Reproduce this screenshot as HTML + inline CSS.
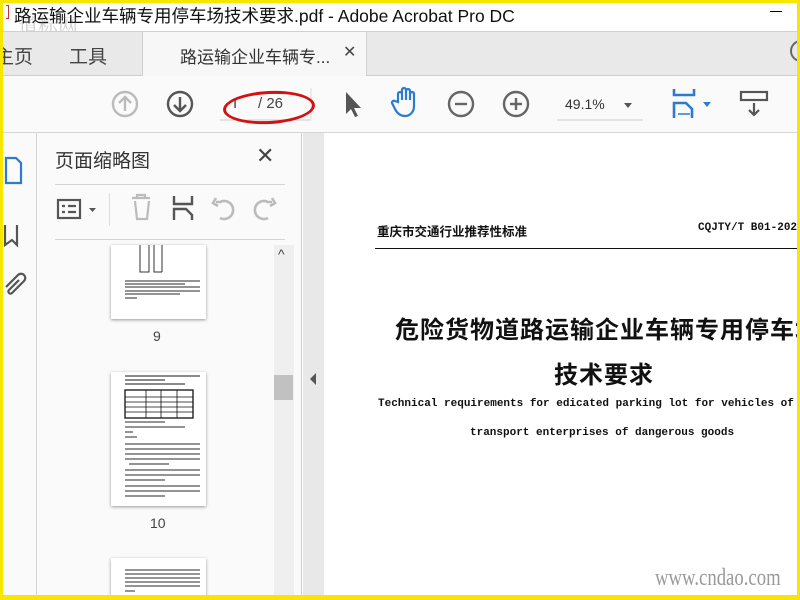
<!DOCTYPE html>
<html><head><meta charset="utf-8"><style>
*{margin:0;padding:0;box-sizing:border-box}
body{width:800px;height:600px;overflow:hidden;position:relative;background:#fff;font-family:"Liberation Sans","Noto Sans CJK SC",sans-serif}
.a{position:absolute}
</style></head><body>
<!-- title bar -->
<div class="a" style="left:0;top:0;width:800px;height:31px;background:#fff"></div>
<div class="a" style="left:14px;top:3px;font-size:17.5px;color:#111;white-space:nowrap">路运输企业车辆专用停车场技术要求.pdf - Adobe Acrobat Pro DC</div>
<div class="a" style="left:6px;top:5px;width:3px;height:14px;border:1px solid #c33;border-left:none"></div>
<div class="a" style="left:18px;top:10px;font-size:20px;color:rgba(120,120,120,.35);font-family:'Noto Serif CJK SC',serif">道标网</div>
<div class="a" style="left:770px;top:11px;width:12px;height:1px;background:#000"></div>
<!-- tab bar -->
<div class="a" style="left:0;top:31px;width:800px;height:45px;background:#e9e9e9;border-top:1px solid #d0d0d0;border-bottom:1px solid #cfcfcf"></div>
<div class="a" style="left:142px;top:32px;width:225px;height:44px;background:#f7f7f7;border-left:1px solid #d0d0d0;border-right:1px solid #d0d0d0"></div>
<div class="a" style="left:-5px;top:42px;font-size:19px;color:#444">主页</div>
<div class="a" style="left:69px;top:42px;font-size:19px;color:#444">工具</div>
<div class="a" style="left:180px;top:43px;font-size:17px;color:#333">路运输企业车辆专...</div>
<div class="a" style="left:343px;top:42px;font-size:16px;color:#444">✕</div>
<div class="a" style="left:790px;top:40px;width:22px;height:22px;border:2px solid #666;border-radius:50%"></div>
<!-- toolbar -->
<div class="a" style="left:0;top:76px;width:800px;height:57px;background:#fafafa;border-bottom:1px solid #d6d6d6"></div>
<svg class="a" style="left:0;top:76px" width="800" height="57">
 <g fill="none" stroke-width="2.4">
 <circle cx="125" cy="28" r="12" stroke="#bbb"/><path d="M125 35V21M119 27l6-6 6 6" stroke="#bbb"/>
 <circle cx="180" cy="28" r="12" stroke="#555"/><path d="M180 21v14M174 29l6 6 6-6" stroke="#555"/>
 <circle cx="461" cy="28" r="12" stroke="#666"/><path d="M455 28h12" stroke="#666"/>
 <circle cx="516" cy="28" r="12" stroke="#666"/><path d="M510 28h12M516 22v12" stroke="#666"/>
 </g>
 <line x1="220" y1="44" x2="310" y2="44" stroke="#ccc"/>
 <line x1="311" y1="12" x2="311" y2="45" stroke="#ddd"/>
 <line x1="557" y1="44" x2="643" y2="44" stroke="#ccc"/>
 <path d="M346 16v22l5-5 4 8 3-1-4-8h7z" fill="#555"/>
 <path d="M398 26v-8a2 2 0 014 0v6-10a2 2 0 014 0v10-9a2 2 0 014 0v9-6a2 2 0 014 0v12c0 6-4 10-9 10s-8-3-10-7l-3-6a2 2 0 013-2z" fill="none" stroke="#2d7bd0" stroke-width="2.2"/>
 <path d="M624 27h8l-4 5z" fill="#555"/>
 <g fill="none" stroke="#2d7bd0" stroke-width="2.6"><path d="M674 13v6h20v-6M674 42v-15h12l6 6v9"/></g>
 <path d="M678 38h12" stroke="#2d7bd0" stroke-width="1.5"/>
 <path d="M703 26h8l-4 5z" fill="#2d7bd0"/>
 <rect x="741" y="16" width="26" height="8" fill="none" stroke="#555" stroke-width="2.2"/>
 <path d="M754 27v12M749 34l5 5 5-5" fill="none" stroke="#555" stroke-width="2.2"/>
</svg>
<div class="a" style="left:233px;top:95px;font-size:15px;color:#444">I&nbsp;&nbsp;&nbsp;&nbsp;&nbsp;/ 26</div>
<div class="a" style="left:565px;top:96px;font-size:14px;color:#333">49.1%</div>
<div class="a" style="left:223px;top:91px;width:92px;height:33px;border:3px solid #d41010;border-radius:50%;transform:rotate(-3deg)"></div>
<!-- left strip -->
<div class="a" style="left:0;top:133px;width:37px;height:467px;background:#fafafa;border-right:1px solid #d0d0d0"></div>
<svg class="a" style="left:0;top:140px" width="40" height="160">
 <path d="M6 18h10l5 5v20H6z" fill="none" stroke="#2d7bd0" stroke-width="2.2"/>
 <path d="M5 85v20l7-5 5 5V85" fill="none" stroke="#555" stroke-width="2.2"/>
 <path d="M6 147l12-12a4 4 0 016 6L12 153a2 2 0 01-3-3l10-10" fill="none" stroke="#555" stroke-width="2.2"/>
</svg>
<!-- panel -->
<div class="a" style="left:38px;top:133px;width:264px;height:467px;background:#fafafa;border-right:1px solid #cfcfcf"></div>
<div class="a" style="left:55px;top:146px;font-size:19px;color:#333">页面缩略图</div>
<div class="a" style="left:256px;top:143px;font-size:22px;color:#444">✕</div>
<div class="a" style="left:55px;top:184px;width:230px;height:1px;background:#d4d4d4"></div>
<div class="a" style="left:55px;top:239px;width:230px;height:1px;background:#d4d4d4"></div>
<div class="a" style="left:109px;top:193px;width:1px;height:33px;background:#ddd"></div>
<svg class="a" style="left:50px;top:190px" width="240" height="40">
 <rect x="8" y="10" width="22" height="18" fill="none" stroke="#555" stroke-width="2.2"/>
 <path d="M12 16h3M12 22h3M18 16h8M18 22h8" stroke="#555" stroke-width="2.2"/>
 <path d="M39 18h7l-3.5 4z" fill="#555"/>
 <path d="M82 8h18M87 8V5h8v3M85 11l2 18h10l2-18" fill="none" stroke="#bbb" stroke-width="2.2"/>
 <path d="M124 6v8h18V6M124 30V19h12l6 6v5" fill="none" stroke="#555" stroke-width="2.4"/>
 <path d="M170 28a9 9 0 100-16h-4M166 8l-3 5 5 3" fill="none" stroke="#bbb" stroke-width="2.6"/>
 <path d="M218 28a9 9 0 110-16h4M222 8l3 5-5 3" fill="none" stroke="#bbb" stroke-width="2.6"/>
</svg>
<!-- scrollbar -->
<div class="a" style="left:274px;top:245px;width:20px;height:355px;background:#efefef"></div>
<div class="a" style="left:278px;top:246px;font-size:14px;color:#444">^</div>
<div class="a" style="left:274px;top:375px;width:19px;height:25px;background:#c1c1c1"></div>
<!-- thumbnails -->
<div class="a" style="left:111px;top:245px;width:95px;height:74px;background:#fff;box-shadow:0 1px 3px #999"></div>
<svg class="a" style="left:111px;top:245px" width="95" height="74">
 <path d="M29 0v27h9V0M43 0v27h8M51 0v27" fill="none" stroke="#333" stroke-width="1"/>
 <g stroke="#555" stroke-width="1.2"><path d="M14 36h75M14 39h60M14 42h75M14 46h75M14 49h55M14 53h12"/></g>
</svg>
<div class="a" style="left:153px;top:328px;font-size:14px;color:#444">9</div>
<div class="a" style="left:111px;top:372px;width:95px;height:134px;background:#fff;box-shadow:0 1px 3px #999"></div>
<svg class="a" style="left:111px;top:372px" width="95" height="134">
 <g stroke="#444" stroke-width="1.2"><path d="M14 4h75M14 8h40M14 12h60"/></g>
 <rect x="14" y="18" width="68" height="28" fill="none" stroke="#111" stroke-width="1.3"/>
 <g stroke="#111" stroke-width="0.8"><path d="M14 25h68M14 30h68M14 35h68M14 40h68M35 18v28M50 18v28M66 18v28"/></g>
 <g stroke="#555" stroke-width="1.2"><path d="M14 50h40M14 55h60M14 60h8M14 65h12M14 72h75M14 77h75M14 82h75M14 87h75M18 92h40M14 98h75M14 103h75M14 108h40M14 114h75M14 119h75M14 124h40"/></g>
</svg>
<div class="a" style="left:150px;top:515px;font-size:14px;color:#444">10</div>
<div class="a" style="left:111px;top:558px;width:95px;height:42px;background:#fff;box-shadow:0 1px 3px #999"></div>
<svg class="a" style="left:111px;top:558px" width="95" height="42">
 <g stroke="#555" stroke-width="1.2"><path d="M14 12h75M14 16h75M14 20h75M14 24h75M14 28h75M14 33h10M14 38h75"/></g>
</svg>
<!-- collapse strip -->
<div class="a" style="left:303px;top:133px;width:21px;height:467px;background:#e8e8e8"></div>
<svg class="a" style="left:308px;top:372px" width="10" height="14"><path d="M8 1L2 7l6 6z" fill="#555"/></svg>
<!-- document -->
<div class="a" style="left:324px;top:133px;width:476px;height:467px;background:#fff;overflow:hidden">
<div class="a" style="left:53px;top:88px;font-size:12.5px;font-weight:bold;color:#111;white-space:nowrap">重庆市交通行业推荐性标准</div>
<div class="a" style="left:374px;top:89px;font-size:11px;font-weight:bold;font-family:'Liberation Mono',monospace;color:#111;white-space:nowrap">CQJTY/T B01-202</div>
<div class="a" style="left:51px;top:115px;width:430px;height:1px;background:#111"></div>
<div class="a" style="left:71px;top:177px;font-size:24px;font-weight:bold;color:#111;white-space:nowrap;letter-spacing:1px">危险货物道路运输企业车辆专用停车场</div>
<div class="a" style="left:230px;top:222px;font-size:24px;font-weight:bold;color:#111;white-space:nowrap;letter-spacing:1px">技术要求</div>
<div class="a" style="left:54px;top:265px;font-size:11px;font-weight:bold;font-family:'Liberation Mono',monospace;color:#111;white-space:nowrap">Technical requirements for edicated parking lot for vehicles of</div>
<div class="a" style="left:146px;top:294px;font-size:11px;font-weight:bold;font-family:'Liberation Mono',monospace;color:#111;white-space:nowrap">transport enterprises of dangerous goods</div>
<div class="a" style="left:331px;top:432px;font-size:24px;font-family:'Liberation Serif',serif;color:#999;transform:scaleX(0.78);transform-origin:left;white-space:nowrap">www.cndao.com</div>
</div>
<!-- yellow frame -->
<div class="a" style="left:0;top:0;width:800px;height:600px;border:3px solid #f9e600;border-bottom-width:5px"></div>
</body></html>
